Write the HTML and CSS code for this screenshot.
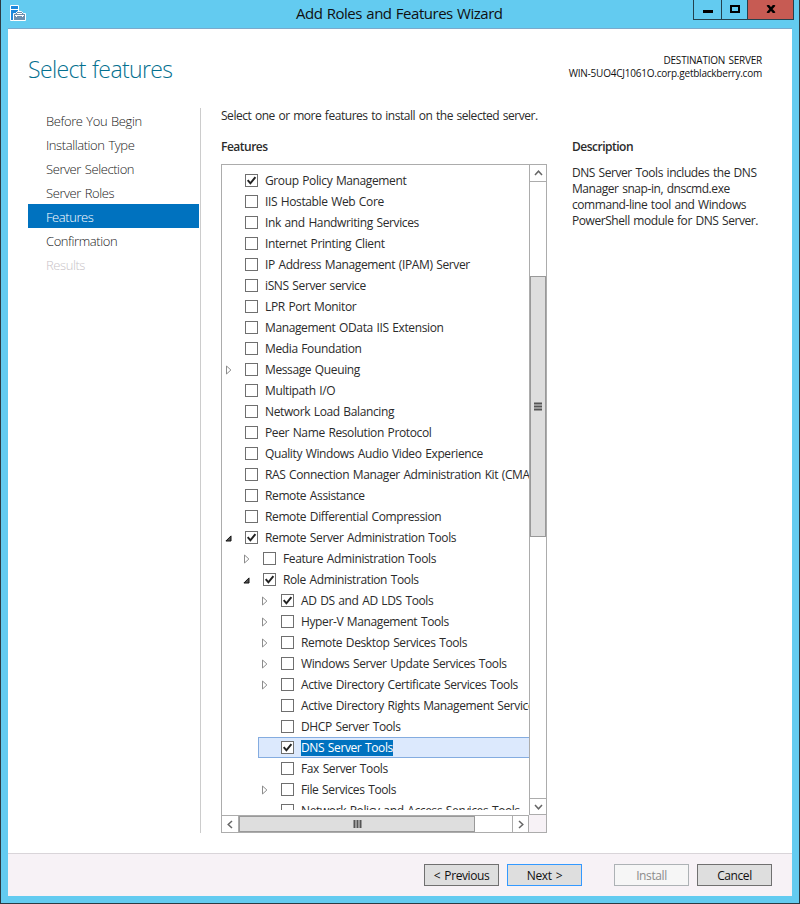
FILE: index.html
```html
<!DOCTYPE html>
<html lang="en">
<head>
<meta charset="utf-8">
<title>Add Roles and Features Wizard</title>
<link rel="stylesheet" href="styles.css">
</head>
<body>
<svg class="defs" width="0" height="0">
  <symbol id="tick" viewBox="0 0 13 13"><path d="M2.7 6.2 5.4 9.3 10.4 3.2" fill="none" stroke="#222" stroke-width="2"/></symbol>
  <symbol id="closed" viewBox="0 0 6 10"><path d="M.5 1v8L4.900 5z" fill="#fff" stroke="#8c8c8c" stroke-width="1"/></symbol>
  <symbol id="open" viewBox="0 0 7 7"><path d="M6 .9V6H.9z" fill="#555" stroke="#111" stroke-width="1"/></symbol>
</svg>
<div class="window">
  <header class="titlebar">
    <svg class="app-icon" width="16" height="16" viewBox="0 0 16 16">
      <path d="M.5.5h8v15h-8z" fill="#1e88dc" stroke="#fff"/>
      <path d="M1 4.500h7" stroke="#fff" fill="none"/>
      <path d="M3.500 15.500V8.500h2l2-2h4l2 2h2v7z" fill="#6e8fae" stroke="#fff"/>
      <path d="M7 8.500h5M5 10.500h9M6.500 10v2M12.500 10v2" stroke="#fff" fill="none"/>
    </svg>
    <h1 class="caption">Add Roles and Features Wizard</h1>
    <div class="controls">
      <span class="ctl min"><svg width="10" height="3"><path d="M0 0h10v3H0z"/></svg></span>
      <span class="ctl max"><svg width="10" height="8"><path d="M1 1h8v6H1z" fill="none" stroke="#000" stroke-width="2"/></svg></span>
      <span class="ctl close"><svg width="10" height="8" viewBox="0 0 10 8"><path d="M1.500 0 8.500 8M8.500 0 1.500 8" stroke="#000" stroke-width="2.500"/></svg></span>
    </div>
  </header>
  <main class="client">
    <div class="head">
      <h2 class="page-title">Select features</h2>
      <div class="dest"><span class="dest-label">DESTINATION SERVER</span><span class="dest-name">WIN-5UO4CJ1061O.corp.getblackberry.com</span></div>
    </div>
    <div class="body">
      <nav class="steps">
        <a>Before You Begin</a><a>Installation Type</a><a>Server Selection</a><a>Server Roles</a><a class="current">Features</a><a>Confirmation</a><a class="off">Results</a>
      </nav>
      <section class="features">
        <p class="intro">Select one or more features to install on the selected server.</p>
        <h3 class="label">Features</h3>
        <div class="listbox">
          <div class="rows">
            <div class="row"><i class="arrow"></i><i class="box"><svg><use href="#tick"/></svg></i><span>Group Policy Management</span></div>
            <div class="row"><i class="arrow"></i><i class="box"></i><span>IIS Hostable Web Core</span></div>
            <div class="row"><i class="arrow"></i><i class="box"></i><span>Ink and Handwriting Services</span></div>
            <div class="row"><i class="arrow"></i><i class="box"></i><span>Internet Printing Client</span></div>
            <div class="row"><i class="arrow"></i><i class="box"></i><span>IP Address Management (IPAM) Server</span></div>
            <div class="row"><i class="arrow"></i><i class="box"></i><span>iSNS Server service</span></div>
            <div class="row"><i class="arrow"></i><i class="box"></i><span>LPR Port Monitor</span></div>
            <div class="row"><i class="arrow"></i><i class="box"></i><span>Management OData IIS Extension</span></div>
            <div class="row"><i class="arrow"></i><i class="box"></i><span>Media Foundation</span></div>
            <div class="row"><i class="arrow"><svg class="tri"><use href="#closed"/></svg></i><i class="box"></i><span>Message Queuing</span></div>
            <div class="row"><i class="arrow"></i><i class="box"></i><span>Multipath I/O</span></div>
            <div class="row"><i class="arrow"></i><i class="box"></i><span>Network Load Balancing</span></div>
            <div class="row"><i class="arrow"></i><i class="box"></i><span>Peer Name Resolution Protocol</span></div>
            <div class="row"><i class="arrow"></i><i class="box"></i><span>Quality Windows Audio Video Experience</span></div>
            <div class="row"><i class="arrow"></i><i class="box"></i><span>RAS Connection Manager Administration Kit (CMAK)</span></div>
            <div class="row"><i class="arrow"></i><i class="box"></i><span>Remote Assistance</span></div>
            <div class="row"><i class="arrow"></i><i class="box"></i><span>Remote Differential Compression</span></div>
            <div class="row"><i class="arrow"><svg class="tri-open"><use href="#open"/></svg></i><i class="box"><svg><use href="#tick"/></svg></i><span>Remote Server Administration Tools</span></div>
            <div class="row l1"><i class="arrow"><svg class="tri"><use href="#closed"/></svg></i><i class="box"></i><span>Feature Administration Tools</span></div>
            <div class="row l1"><i class="arrow"><svg class="tri-open"><use href="#open"/></svg></i><i class="box"><svg><use href="#tick"/></svg></i><span>Role Administration Tools</span></div>
            <div class="row l2"><i class="arrow"><svg class="tri"><use href="#closed"/></svg></i><i class="box"><svg><use href="#tick"/></svg></i><span>AD DS and AD LDS Tools</span></div>
            <div class="row l2"><i class="arrow"><svg class="tri"><use href="#closed"/></svg></i><i class="box"></i><span>Hyper-V Management Tools</span></div>
            <div class="row l2"><i class="arrow"><svg class="tri"><use href="#closed"/></svg></i><i class="box"></i><span>Remote Desktop Services Tools</span></div>
            <div class="row l2"><i class="arrow"><svg class="tri"><use href="#closed"/></svg></i><i class="box"></i><span>Windows Server Update Services Tools</span></div>
            <div class="row l2"><i class="arrow"><svg class="tri"><use href="#closed"/></svg></i><i class="box"></i><span>Active Directory Certificate Services Tools</span></div>
            <div class="row l2"><i class="arrow"></i><i class="box"></i><span>Active Directory Rights Management Services Tools</span></div>
            <div class="row l2"><i class="arrow"></i><i class="box"></i><span>DHCP Server Tools</span></div>
            <div class="row l2 selected"><i class="arrow"></i><i class="box"><svg><use href="#tick"/></svg></i><span>DNS Server Tools</span></div>
            <div class="row l2"><i class="arrow"></i><i class="box"></i><span>Fax Server Tools</span></div>
            <div class="row l2"><i class="arrow"><svg class="tri"><use href="#closed"/></svg></i><i class="box"></i><span>File Services Tools</span></div>
            <div class="row l2"><i class="arrow"></i><i class="box"></i><span>Network Policy and Access Services Tools</span></div>
          </div>
          <div class="vbar">
            <span class="vbtn up"><svg width="9" height="6"><path d="M1 5 4.500 1.200 8 5" fill="none" stroke="#666" stroke-width="1.500"/></svg></span>
            <span class="vthumb"><svg width="8" height="9"><path d="M0 1.500h8M0 4.500h8M0 7.500h8" stroke="#555" stroke-width="2"/></svg></span>
            <span class="vbtn down"><svg width="9" height="6"><path d="M1 1 4.500 4.800 8 1" fill="none" stroke="#666" stroke-width="1.500"/></svg></span>
          </div>
          <div class="hbar">
            <span class="hbtn left"><svg width="6" height="9"><path d="M5 1 1.200 4.500 5 8" fill="none" stroke="#666" stroke-width="1.500"/></svg></span>
            <span class="hthumb"><svg width="9" height="8"><path d="M1.500 0v8M4.500 0v8M7.500 0v8" stroke="#555" stroke-width="2"/></svg></span>
            <span class="hbtn right"><svg width="6" height="9"><path d="M1 1 4.800 4.500 1 8" fill="none" stroke="#666" stroke-width="1.500"/></svg></span>
          </div>
          <div class="corner"></div>
        </div>
      </section>
      <aside class="desc">
        <h3 class="label">Description</h3>
        <p class="desc-text">DNS Server Tools includes the DNS<br>Manager snap-in, dnscmd.exe<br>command-line tool and Windows<br>PowerShell module for DNS Server.</p>
      </aside>
    </div>
  </main>
  <footer class="footer">
    <button class="btn">&lt; Previous</button>
    <button class="btn next">Next &gt;</button>
    <button class="btn install" disabled>Install</button>
    <button class="btn">Cancel</button>
  </footer>
</div>
</body>
</html>
```
FILE: styles.css
```css
* { box-sizing: border-box; }
body { margin: 0; font: 12px/16px "Open Sans", "Noto Sans", sans-serif; letter-spacing: -.38px; word-spacing: .9px; color: #2b2b2b; }
h1, h2, h3, p { margin: 0; font-weight: 400; }
.defs { position: absolute; }
.window { display: flex; flex-direction: column; width: 800px; height: 904px; padding: 0 7px 7px; background: #63cbf0; border: 1px solid #2c3a42; border-top: 0; overflow: hidden; }
.titlebar { display: flex; align-items: flex-start; height: 29px; border-bottom: 1px solid #7ba9cc; flex: none; }
.app-icon { margin: 5px 0 0 2px; flex: none; }
.caption { font-size: 15px; line-height: 20px; color: #101010; margin: 3px 0 0 270px; letter-spacing: -.48px; white-space: nowrap; }
.controls { display: flex; height: 20px; margin: 0 -2px 0 auto; }
.ctl { display: flex; align-items: center; justify-content: center; height: 20px; border: 1px solid #23424f; border-top: 0; }
.min { width: 28px; padding-top: 4px; border-right: 0; }
.max { width: 26px; border-right: 0; padding-bottom: 2px; }
.close { width: 47px; background: #c75b53; padding-bottom: 2px; }
.client { display: flex; flex-direction: column; height: 824px; background: #fff; flex: none; }
.head { display: flex; justify-content: space-between; height: 79px; padding: 0 30px 0 20px; }
.page-title { font-size: 23px; line-height: 32px; font-weight: 300; color: #04708f; margin-top: 24px; letter-spacing: -.63px; }
.dest { display: flex; flex-direction: column; align-items: flex-end; margin-top: 25px; font-size: 10px; line-height: 13px; letter-spacing: -.22px; color: #111; }
.body { display: flex; height: 725px; }
.steps { display: flex; flex-direction: column; width: 193px; padding: 0 1px 0 20px; border-right: 1px solid #ccc; }
.steps a { height: 24px; padding: 0 0 0 18px; font-size: 13px; line-height: 26px; font-weight: 300; letter-spacing: -.42px; color: #222; }
.steps .current { background: #0072bf; color: #fff; }
.steps .off { color: #c8c3c7; }
.features { width: 326px; margin-left: 20px; }
.intro { margin-bottom: 15px; white-space: nowrap; letter-spacing: -.46px; }
.label { font-size: 12px; line-height: 16px; font-weight: 600; letter-spacing: -.5px; }
.listbox { display: grid; grid-template: 650px 17px / 307px 17px; width: 326px; height: 669px; margin-top: 9px; border: 1px solid #acacac; }
.rows { height: 645px; padding-top: 5px; overflow: hidden; }
.row { display: flex; align-items: center; height: 21px; white-space: nowrap; }
.row span { margin-left: 7px; line-height: 16px; }
.l1 { margin-left: 18px; }
.l2 { margin-left: 36px; }
.arrow { display: flex; align-items: center; width: 23px; height: 21px; padding-left: 4px; flex: none; }
.tri { width: 6px; height: 10px; margin-top: 1px; }
.tri-open { width: 7px; height: 7px; margin: 2px 0 0 -1px; }
.box { display: flex; width: 13px; height: 13px; border: 1px solid #6f6f6f; background: #fff; flex: none; }
.box svg { width: 13px; height: 13px; margin: -1px; flex: none; }
.selected { border: 1px solid #84ace0; border-right: 0; background: #dce9fd; }
.selected .arrow { width: 22px; }
.selected span { background: #0072bf; color: #fff; }
.vbar { display: flex; flex-direction: column; border-left: 1px solid #acacac; }
.vbtn { display: flex; align-items: center; justify-content: center; height: 17px; }
.up { border-bottom: 1px solid #acacac; }
.down { margin-top: auto; border-top: 1px solid #acacac; border-bottom: 1px solid #acacac; }
.vthumb { display: flex; align-items: center; justify-content: center; height: 261px; margin-top: 94px; background: #dedede; border: 1px solid #999; }
.hbar { display: flex; border-top: 1px solid #acacac; }
.hbtn { display: flex; align-items: center; justify-content: center; width: 17px; }
.left { border-right: 1px solid #acacac; }
.right { margin-left: auto; border-left: 1px solid #acacac; border-right: 1px solid #acacac; }
.hthumb { display: flex; align-items: center; justify-content: center; width: 236px; background: #dedede; border: 1px solid #999; }
.corner { background: #f7f2f6; }
.desc { margin: 31px 0 0 25px; }
.desc-text { margin-top: 10px; letter-spacing: -.44px; white-space: nowrap; }
.footer { display: flex; height: 43px; padding: 10px 20px 0 0; justify-content: flex-end; background: #f7f2f6; border-top: 1px solid #d9d5d9; flex: none; }
.btn { width: 75px; height: 22px; margin: 0 0 0 8px; padding: 2px 0 0; font: 12px/18px "Open Sans", sans-serif; letter-spacing: -.4px; word-spacing: 1.5px; color: #111; background: #dedede; border: 1px solid #707070; }
.next { border-color: #3399ff; }
.install { margin-left: 32px; color: #8b8b8b; background: #f6f6f6; border-color: #adb2b5; }
```
